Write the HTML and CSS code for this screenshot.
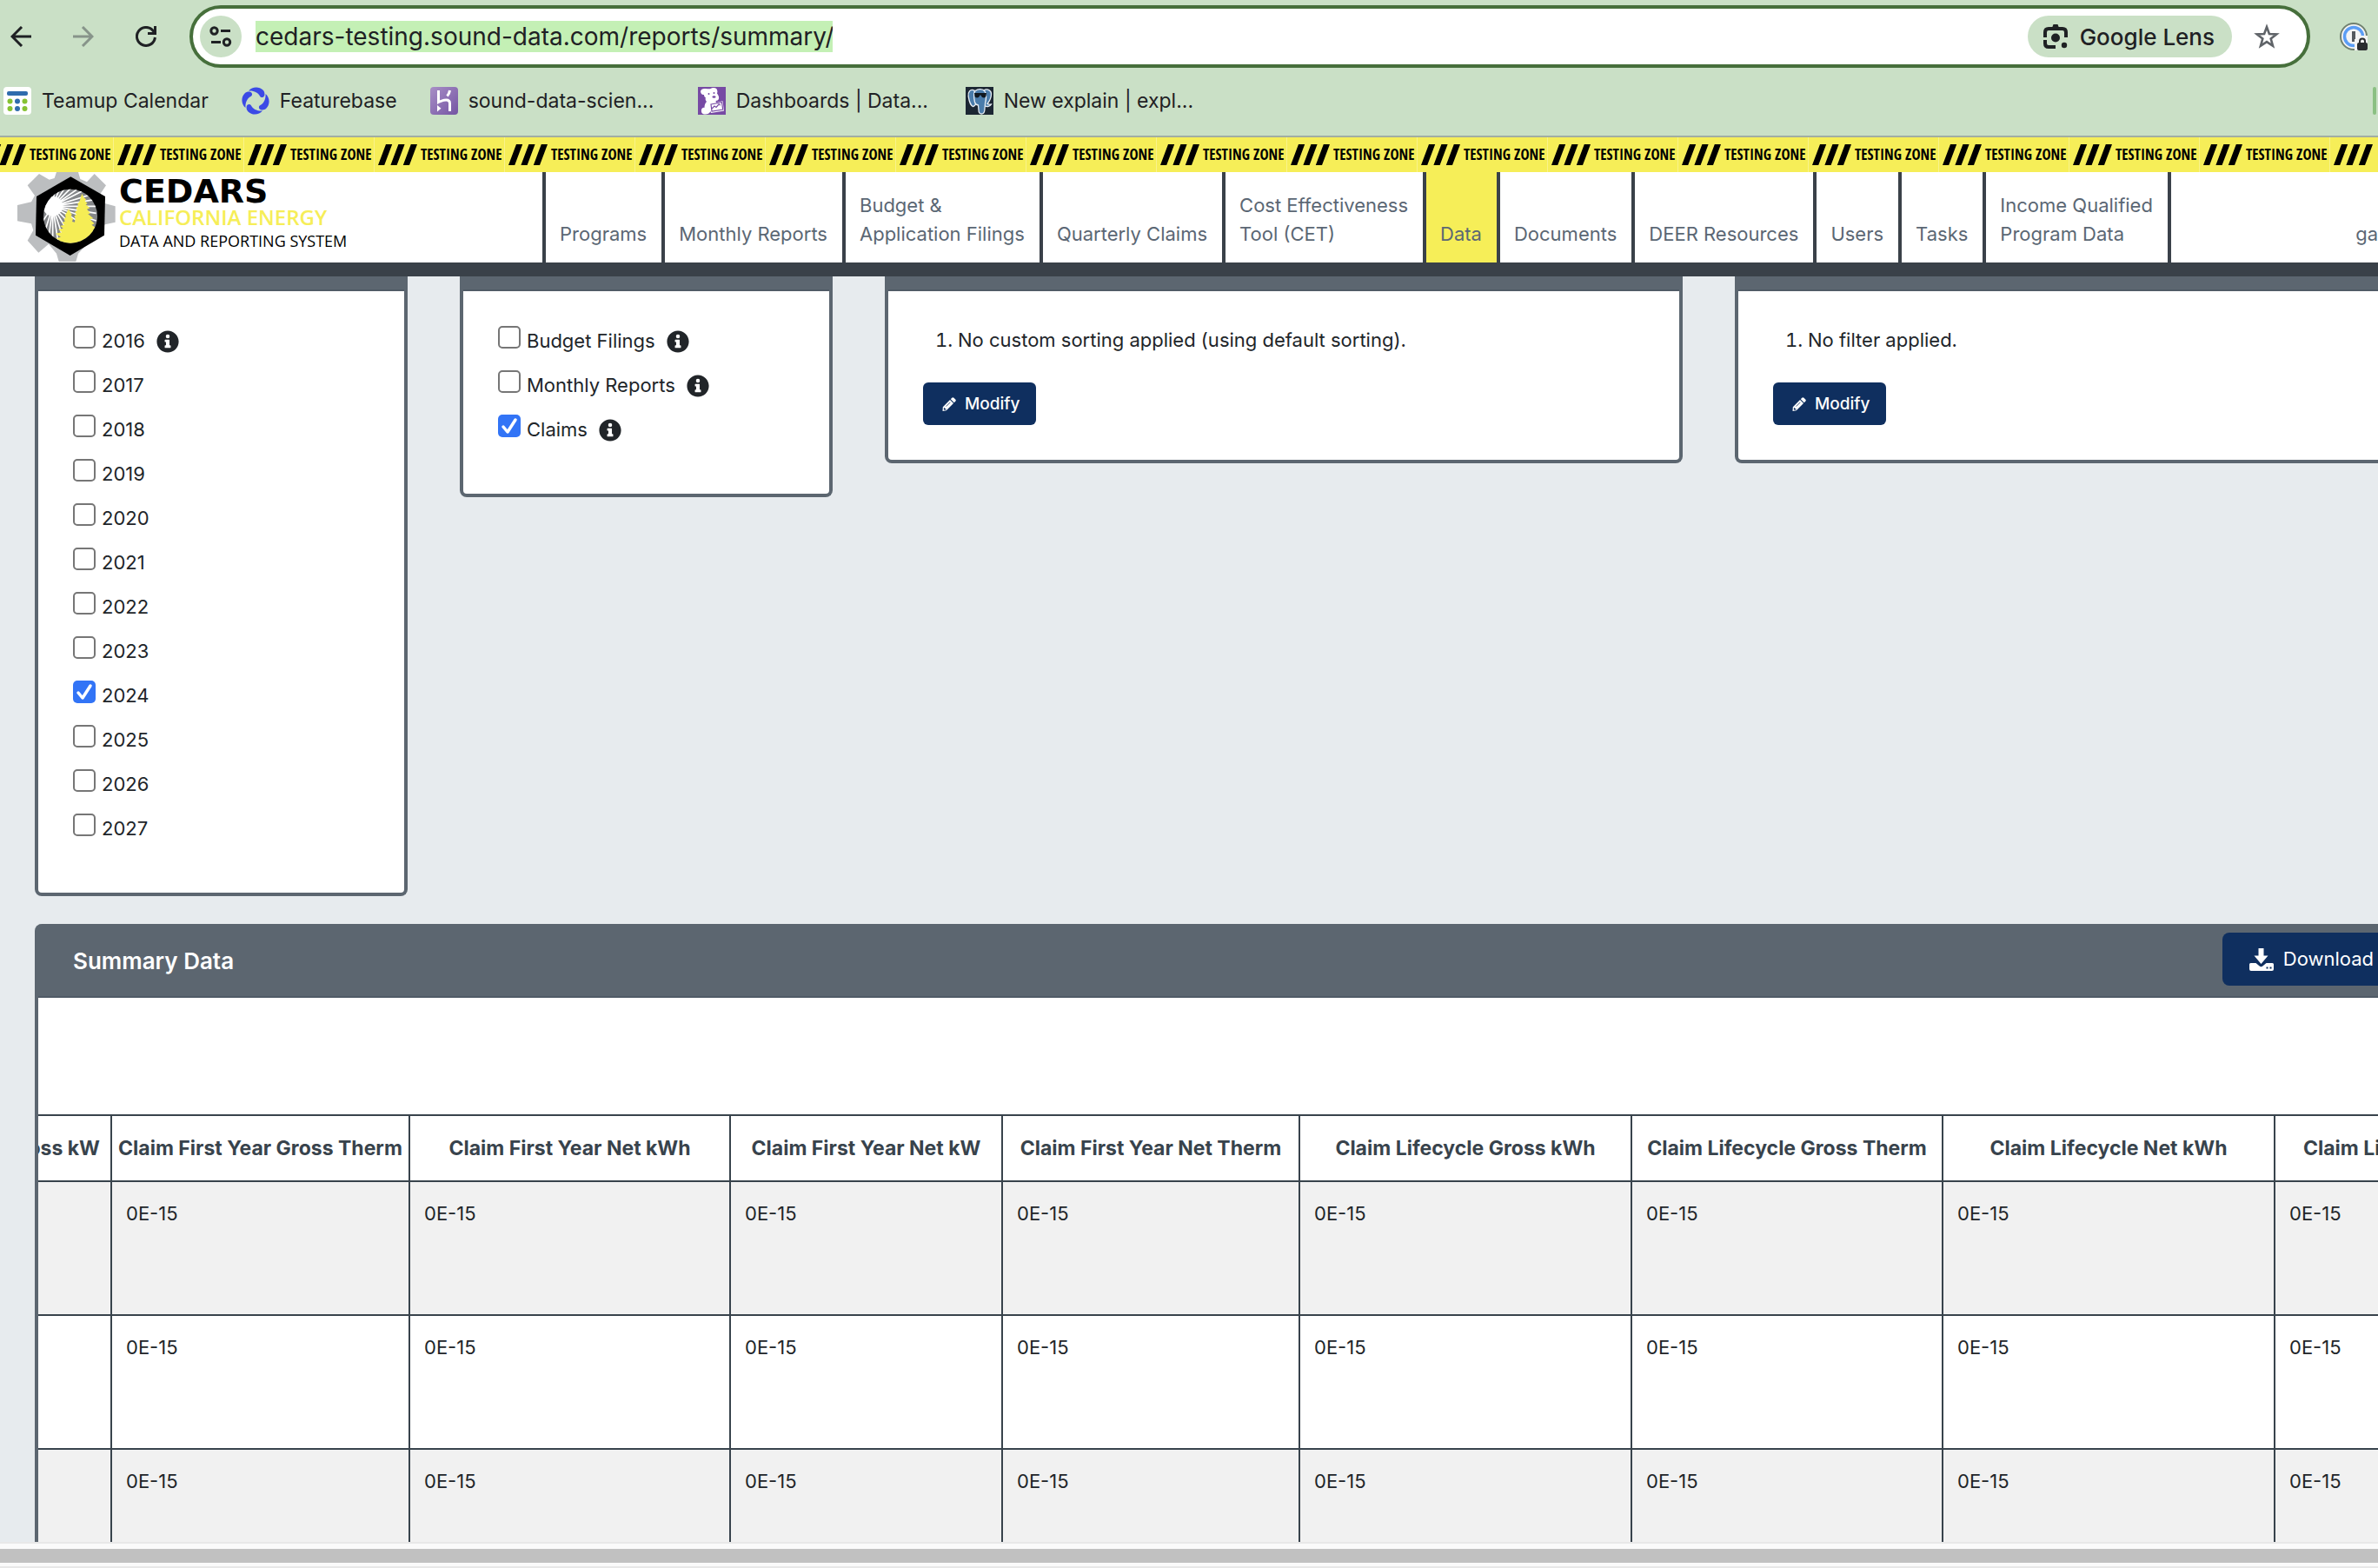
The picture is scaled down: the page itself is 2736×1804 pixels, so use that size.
FILE: index.html
```html
<!DOCTYPE html>
<html lang="en">
<head>
<meta charset="utf-8">
<meta name="viewport" content="width=device-width, initial-scale=1">
<title>CEDARS - Summary Reports</title>
<link rel="stylesheet" href="styles.css">
</head>
<body>
<svg class="defs" aria-hidden="true">
  <symbol id="info" viewBox="0 0 512 512"><path fill="currentColor" d="M256 8C119 8 8 119 8 256s111 248 248 248 248-111 248-248S393 8 256 8zm0 85a45 45 0 1 1 0 90 45 45 0 0 1 0-90zm68 295c0 7-5 12-12 12H200c-7 0-12-5-12-12v-34c0-7 5-12 12-12h16v-74h-16c-7 0-12-5-12-12v-34c0-7 5-12 12-12h84c7 0 12 5 12 12v120h16c7 0 12 5 12 12z"/></symbol>
  <symbol id="pencil" viewBox="0 0 16 16"><path fill="currentColor" d="M11.2.8a1.6 1.6 0 0 1 2.3 0l1.7 1.7a1.6 1.6 0 0 1 0 2.3l-1.4 1.4-4-4zM9 3l4 4-8.2 8.200L.5 16 .8 11.200zM2 12.200l-.2 1.900.7.700 1.900-.3v-1.200H3.200v-1.100z"/><path d="M4.600 10.600 9.400 5.800" stroke="#0f2f5f" stroke-width=".8"/></symbol>
</svg>

<header class="browser">
  <div class="toolbar">
    <button class="tool" aria-label="Back"><svg width="24" height="24" viewBox="0 0 24 24" fill="none" stroke="#1f2124" stroke-width="3"><path d="M24 12H2M13 1 2 12l11 11"/></svg></button>
    <button class="tool" aria-label="Forward"><svg width="24" height="24" viewBox="0 0 24 24" fill="none" stroke="#87948a" stroke-width="3"><path d="M0 12h22M11 1l11 11-11 11"/></svg></button>
    <button class="tool" aria-label="Reload"><svg width="24" height="24" viewBox="0 0 24 24" fill="none" stroke="#1f2124" stroke-width="3"><path d="M22.400 13A10.500 10.500 0 1 1 20 5.200l2 3"/><path d="M22.500 0v8.500H14"/></svg></button>
    <div class="omnibox">
      <button class="site-info" aria-label="View site information"><svg width="26" height="24" viewBox="0 0 26 24" fill="none" stroke="#1f2124" stroke-width="3"><circle cx="5.500" cy="5.500" r="3.700"/><path d="M13 5.500h11M2 18.500h11"/><circle cx="20" cy="18.500" r="3.700"/></svg></button>
      <input class="url" type="text" aria-label="Address" value="cedars-testing.sound-data.com/reports/summary/" size="46">
      <button class="lens"><svg width="28" height="28" viewBox="0 0 28 28"><path fill="none" stroke="#1f2124" stroke-width="4" d="M2 15V9q0-4 4-4h16q4 0 4 4v6M2 18v4q0 4 4 4h8"/><path fill="#1f2124" d="M10 4 11.500 0h5L18 4z"/><circle cx="14" cy="15.500" r="5" fill="#1f2124"/><circle cx="24" cy="24" r="3.200" fill="#1f2124"/></svg>Google Lens</button>
      <button class="tool star" aria-label="Bookmark this tab"><svg width="30" height="30" viewBox="0 0 30 30"><path fill="none" stroke="#5f6368" stroke-width="2.600" d="m15 4 2.900 8 8.400.400-6.600 5.200 2.300 8.200-7-4.700-7 4.700 2.300-8.200L3.700 12.400l8.400-.400z"/></svg></button>
    </div>
    <button class="tool" aria-label="1Password"><svg width="32" height="32" viewBox="0 0 32 32"><circle cx="16" cy="16" r="15" fill="#f4f4f4" stroke="#70806f" stroke-width="2"/><circle cx="16" cy="16" r="10.500" fill="none" stroke="#5b9df5" stroke-width="3.500"/><rect x="14" y="10" width="4" height="12" fill="#55595e"/><path fill="#f4f4f4" d="M17 19h3v-4h12v17H17z"/><rect x="20" y="23" width="12" height="9" rx="2" fill="#2b2d30"/><path fill="none" stroke="#2b2d30" stroke-width="2" d="M23 24v-2.500a3 3 0 0 1 6 0V24"/></svg></button>
  </div>
  <nav class="bookmarks" aria-label="Bookmarks">
    <a href="#"><svg width="32" height="32" viewBox="0 0 32 32"><rect width="32" height="32" rx="4" fill="#fff"/><rect x="4" y="5" width="24" height="5" rx="2" fill="#2f6cad"/><g fill="#86c232"><circle cx="7.500" cy="16.500" r="3"/><circle cx="24.500" cy="16.500" r="3"/><circle cx="7.500" cy="25" r="3"/><circle cx="24.500" cy="25" r="3"/></g><g fill="#2f6cad"><circle cx="16" cy="16.500" r="3"/><circle cx="16" cy="25" r="3"/></g></svg><span>Teamup Calendar</span></a>
    <a href="#"><svg width="32" height="32" viewBox="0 0 32 32" fill="#3b4ae6"><g id="fb"><path d="M8 4.500C12-.500 20-1 24.500 3.500c2 2 2.200 4.500 1.700 6.500-.600 2.300-4 3-5.200.500C19 6.500 14 4 8 4.500z"/></g><use href="#fb" transform="rotate(90 16 16)"/><use href="#fb" transform="rotate(180 16 16)"/><use href="#fb" transform="rotate(270 16 16)"/></svg><span>Featurebase</span></a>
    <a href="#"><svg width="32" height="32" viewBox="0 0 32 32"><defs><linearGradient id="hk" x1="0" y1="0" x2="1" y2="1"><stop offset="0" stop-color="#a88fc6"/><stop offset="1" stop-color="#7454a3"/></linearGradient></defs><rect width="32" height="32" rx="4" fill="url(#hk)"/><path fill="none" stroke="#fff" stroke-width="3" d="M9.500 4v13.500c3-1.500 6-2.500 9-2.500q4 0 4 4v9M22.500 4c-.300 2.500-1.300 4.500-3 6.500"/><path fill="#fff" d="m8 21 4.500 3.800L8 28.500z"/></svg><span class="clip">sound-data-scien...</span></a>
    <a href="#"><svg width="32" height="32" viewBox="0 0 32 32"><rect width="32" height="32" fill="#774aa4"/><path fill="#fff" d="M3 5c.500-2.500 3-3.500 6-3 2 0 3.500.500 5 .200C16 1 19 .500 20.500 1.500c1.800 1 2.500 4 1.500 6 1.500 2 2.500 4 2 6-.500 1.800-2 2.500-3.500 2.500l.500 2 7.500-1.700 1.500 11.200-15 2.500-.500-2c-1 2.500-3.500 3.500-6 3.500-3.500 0-5-2-4.500-5 .300-2 2-3 3.500-2.500 0-3 .500-5 2.500-7-1.500-1.500-1.500-3-1.200-5C7.500 12 7 10.500 7 9 5 9.500 3 7.500 3 5z"/><path fill="none" stroke="#774aa4" stroke-width="1.200" d="m15 20 12.500-2.300 1.200 8.300L16 28zM16 25l3-3 2 1.500 3-3.500 2 1"/><circle cx="12.500" cy="8" r="1" fill="#774aa4"/><circle cx="18.500" cy="7" r="1" fill="#774aa4"/><ellipse cx="18.500" cy="11.500" rx="2" ry="1.200" fill="#774aa4"/></svg><span class="clip">Dashboards | Data...</span></a>
    <a href="#"><svg width="32" height="32" viewBox="0 0 32 32"><rect width="32" height="32" fill="#1c2733"/><g stroke="#e8eef4" stroke-width="1.300" fill="#4a7cab"><path d="M10 4C5 2 2.500 6 3.200 11c.800 5.500 3 11 5.300 11.500 1.500.200 2.300-1.500 3.500-3z"/><path d="M21 4c4-2.500 8.500 0 8.500 4 0 5-2.500 9-4.500 11.500 1.500 1 3 .500 4.500.500-1.500 2.500-5 3-7 2z"/><path d="M11 4.500c3.500-2.500 8.500-2.500 11 .500 2.500 4 1.500 10 .500 14l-.700 8c-.300 3-1.600 4-3.600 4s-3.200-1.500-3.200-4.500l-.500-5.500c-2-.500-3.500-1.500-4-3.500C9.500 13 8.500 8 11 4.500z"/></g><path fill="#101820" d="M10 7h14l-.500 3.500c-.500 2.500-4.500 2.500-5.500 0L17 9l-1 1.500c-1 2.500-5 2.500-5.500 0z"/></svg><span class="clip">New explain | expl...</span></a>
    <i class="divider"></i>
  </nav>
</header>

<div class="tape">
  <span>TESTING ZONE</span><span>TESTING ZONE</span><span>TESTING ZONE</span><span>TESTING ZONE</span><span>TESTING ZONE</span><span>TESTING ZONE</span><span>TESTING ZONE</span><span>TESTING ZONE</span><span>TESTING ZONE</span><span>TESTING ZONE</span><span>TESTING ZONE</span><span>TESTING ZONE</span><span>TESTING ZONE</span><span>TESTING ZONE</span><span>TESTING ZONE</span><span>TESTING ZONE</span><span>TESTING ZONE</span><span>TESTING ZONE</span><span></span>
</div>

<header class="site">
  <a class="brand" href="#">
    <svg width="113" height="104" viewBox="60 144 339 312">
      <path fill="#bcbec0" d="M195 144h75l7 24 23 10 26-28 40 40-20 30 16 14v18l36 10v55l-36 8-92 100-8 28h-59l-8-28-27-33-35 30-38-42 20-35-7-23-48-9v-55l48-11 12-22-25-35 40-40 35 20 18-5z"/>
      <path d="m244 160 119 68-3 134-118 70-119-70 3-134z"/>
      <clipPath id="disc"><circle cx="243" cy="296" r="93"/></clipPath>
      <g clip-path="url(#disc)">
        <path fill="#85878a" d="M145 200h196v190H145z"/>
        <circle cx="182" cy="262" r="34" fill="#fff"/>
        <path stroke="#fff" stroke-width="5" d="M182 262 190 190M182 262l28-72M182 262l48-72M182 262l70-70M182 262l92-64M182 262l120-62M182 262l150-46M182 262l150-24M182 262l150 0M182 262l150 24M182 262l150 50M182 262l120 70M182 262l90 90M182 262l60 100M182 262l36 110M182 262l18 120M182 262v120M182 262l-14 110M182 262l-28 90M182 262l-40 60"/>
        <path fill="#f5ed55" d="m283 218 6 14 8 6-4 6 9 8-6 4 14 12-10 4 12 14-8 3 18 15-12 3 16 15-10 4 18 12-14 6 14 12-20 8 2 20-30 20-40 12-44-6-10-24 14-6-12-8 16-4-18-12 22-4-12-10 16-4-10-8 14-4-7-8 9-4-3-8 6-6-2-8 5-8 7-13 6 12 5 8-3 8 7 6-3 10 9 2 2-14-4-6 8-8-6-6 9-8-5-6 8-8-2-8 6-6z"/>
      </g>
    </svg>
    <span class="brand-text"><b class="brand-name">CEDARS</b><span class="brand-energy">CALIFORNIA ENERGY</span><span class="brand-system">DATA AND REPORTING SYSTEM</span></span>
  </a>
  <nav class="menu" aria-label="Main">
    <a href="#">Programs</a>
    <a href="#">Monthly Reports</a>
    <a href="#">Budget &amp;<br>Application Filings</a>
    <a href="#">Quarterly Claims</a>
    <a href="#">Cost Effectiveness<br>Tool (CET)</a>
    <a href="#" class="active">Data</a>
    <a href="#">Documents</a>
    <a href="#">DEER Resources</a>
    <a href="#">Users</a>
    <a href="#">Tasks</a>
    <a href="#">Income Qualified<br>Program Data</a>
  </nav>
  <a class="account" href="#">ga</a>
</header>

<main>
  <div class="filters">
    <section class="card">
      <div class="card-body checks">
        <label><input type="checkbox"><span>2016</span><svg class="info"><use href="#info"/></svg></label>
        <label><input type="checkbox"><span>2017</span></label>
        <label><input type="checkbox"><span>2018</span></label>
        <label><input type="checkbox"><span>2019</span></label>
        <label><input type="checkbox"><span>2020</span></label>
        <label><input type="checkbox"><span>2021</span></label>
        <label><input type="checkbox"><span>2022</span></label>
        <label><input type="checkbox"><span>2023</span></label>
        <label><input type="checkbox" checked><span>2024</span></label>
        <label><input type="checkbox"><span>2025</span></label>
        <label><input type="checkbox"><span>2026</span></label>
        <label><input type="checkbox"><span>2027</span></label>
      </div>
    </section>
    <section class="card">
      <div class="card-body checks">
        <label><input type="checkbox"><span>Budget Filings</span><svg class="info"><use href="#info"/></svg></label>
        <label><input type="checkbox"><span>Monthly Reports</span><svg class="info"><use href="#info"/></svg></label>
        <label><input type="checkbox" checked><span>Claims</span><svg class="info"><use href="#info"/></svg></label>
      </div>
    </section>
    <section class="card">
      <div class="card-body rules">
        <ol><li>No custom sorting applied (using default sorting).</li></ol>
        <button class="modify"><svg width="16" height="16"><use href="#pencil"/></svg>Modify</button>
      </div>
    </section>
    <section class="card open">
      <div class="card-body rules">
        <ol><li>No filter applied.</li></ol>
        <button class="modify"><svg width="16" height="16"><use href="#pencil"/></svg>Modify</button>
      </div>
    </section>
  </div>

  <section class="summary">
    <div class="summary-head">
      <h2>Summary Data</h2>
      <button class="download"><svg width="28" height="26" viewBox="0 0 28 26" fill="#fff"><path d="M10.500 0h6v8.500h5L13.500 18 5.500 8.500h5z"/><path d="M1.500 17h6l4.200 3.600q1.800 1.300 3.600 0L19.500 17h7q1.500 0 1.500 1.500V24q0 2-2 2H2q-2 0-2-2v-5.500Q0 17 1.500 17z"/><path fill="#0f2f5f" d="M19.500 21.500h2v2h-2zM23.500 21.500h2v2h-2z"/></svg>Download</button>
    </div>
    <div class="table-wrap">
      <table>
        <colgroup><col class="c84"><col class="c343"><col class="c369"><col class="c313"><col class="c342"><col class="c382"><col class="c358"><col class="c382"><col></colgroup>
        <thead>
          <tr><th class="scrolled"><span>Claim First Year Gross kW</span></th><th>Claim First Year Gross Therm</th><th>Claim First Year Net kWh</th><th>Claim First Year Net kW</th><th>Claim First Year Net Therm</th><th>Claim Lifecycle Gross kWh</th><th>Claim Lifecycle Gross Therm</th><th>Claim Lifecycle Net kWh</th><th class="edge">Claim Lifecycle Net Therm</th></tr>
        </thead>
        <tbody>
          <tr><td></td><td>0E-15</td><td>0E-15</td><td>0E-15</td><td>0E-15</td><td>0E-15</td><td>0E-15</td><td>0E-15</td><td>0E-15</td></tr>
          <tr><td></td><td>0E-15</td><td>0E-15</td><td>0E-15</td><td>0E-15</td><td>0E-15</td><td>0E-15</td><td>0E-15</td><td>0E-15</td></tr>
          <tr><td></td><td>0E-15</td><td>0E-15</td><td>0E-15</td><td>0E-15</td><td>0E-15</td><td>0E-15</td><td>0E-15</td><td>0E-15</td></tr>
        </tbody>
      </table>
    </div>
  </section>
</main>
<div class="scrollbar"><i></i></div>
</body>
</html>
```
FILE: styles.css
```css
:root {
  --ink: #212529;
  --dark: #3a4149;
  --slate: #5c6670;
  --navy: #0f2f5f;
  --chrome: #cae0c6;
  --yellow: #f6ee58;
}
*, *::before { box-sizing: border-box; }
body {
  margin: 0;
  height: 100vh;
  display: flex;
  flex-direction: column;
  overflow: hidden;
  background: #e7ebee;
  color: var(--ink);
  font: 22px/33px Inter, "Liberation Sans", sans-serif;
}
a { color: inherit; text-decoration: none; }
button, input { font: inherit; color: inherit; }
button { border: 0; padding: 0; background: none; cursor: pointer; }
svg { flex: none; display: block; }
.defs { position: absolute; width: 0; height: 0; }

/* Browser frame */
.browser { flex: none; background: var(--chrome); border-bottom: 2px solid #a2aea2; color: #1f2124; }
.toolbar { display: flex; align-items: center; padding: 6px 12px; height: 84px; gap: 48px; }
.tool { flex: none; }
.omnibox {
  flex: 1;
  display: flex;
  align-items: center;
  height: 72px;
  margin: 0 -14px 0 -10px;
  padding: 0 31px 0 8px;
  border: 4px solid #466f3b;
  border-radius: 36px;
  background: #fff;
}
.site-info {
  display: grid;
  place-items: center;
  width: 48px;
  height: 48px;
  margin-right: 16px;
  border-radius: 50%;
  background: var(--chrome);
}
.url {
  width: 664px;
  height: 36px;
  padding: 0;
  border: 0;
  background: #c4f0b5;
  font-size: 28px;
  line-height: 36px;
}
.lens {
  display: flex;
  align-items: center;
  gap: 14px;
  height: 48px;
  margin: 0 25px 0 auto;
  padding: 0 20px 0 18px;
  border-radius: 24px;
  background: var(--chrome);
  font-size: 26px;
  font-weight: 500;
}
.bookmarks {
  display: flex;
  align-items: center;
  gap: 38px;
  height: 72px;
  padding: 0 2px 8px 4px;
  font-size: 23px;
}
.bookmarks a { display: flex; align-items: center; gap: 12px; }
.bookmarks span { white-space: nowrap; }
.bookmarks .clip { width: 226px; }
.divider { width: 4px; height: 32px; margin-left: auto; border-radius: 2px; background: #8bc083; }

/* Testing tape */
.tape {
  flex: none;
  display: flex;
  height: 40px;
  margin-left: -20px;
  overflow: hidden;
  background: var(--yellow);
  color: #000;
  font: 700 17px/40px "Open Sans Condensed", "Roboto Condensed", "Open Sans", sans-serif;
}
.tape span {
  flex: none;
  display: flex;
  align-items: center;
  gap: 4px;
  width: 150px;
  padding-left: 4px;
  border-left: 1px solid #f9f38c;
  white-space: nowrap;
}
.tape span::before {
  content: "";
  width: 45px;
  height: 24px;
  background: #000;
  clip-path: polygon(20% 0, 36% 0, 16% 100%, 0 100%, 20% 0, 52% 0, 68% 0, 48% 100%, 32% 100%, 52% 0, 84% 0, 100% 0, 80% 100%, 64% 100%, 84% 0);
}

/* Site header */
.site {
  flex: none;
  display: flex;
  height: 120px;
  background: #fff;
  border-bottom: 16px solid var(--dark);
  color: #5b6774;
}
.brand { flex: 0 0 624px; display: flex; gap: 4px; padding-left: 20px; }
.brand-text { display: flex; flex-direction: column; padding-top: 4px; color: #000; }
.brand-name { font: 700 38px/36px "DejaVu Sans", sans-serif; }
.brand-energy { font: 600 24px/24px "Open Sans", sans-serif; color: var(--yellow); }
.brand-system { font: 400 18px/30px "Open Sans", sans-serif; }
.menu { display: flex; border-right: 4px solid var(--dark); }
.menu a {
  display: flex;
  align-items: flex-end;
  padding: 0 17px 16px 16px;
  border-left: 4px solid var(--dark);
  white-space: nowrap;
}
.menu .active { background: var(--yellow); }
.account { align-self: flex-end; margin-left: auto; padding-bottom: 16px; }

/* Filter cards */
main { flex: 1; min-height: 0; overflow: hidden; padding-left: 40px; }
.filters {
  display: grid;
  grid-template-columns: 429fr 429fr 918fr 740fr;
  gap: 60px;
  align-items: start;
  margin-bottom: 32px;
}
.card {
  border: 4px solid var(--slate);
  border-top: 0;
  border-radius: 0 0 8px 8px;
  background: #fff;
}
.card::before {
  content: "";
  display: block;
  height: 17px;
  background: var(--slate);
  border-bottom: 2px solid #505b66;
}
.card.open { border-right: 0; border-radius: 0 0 0 8px; }
.checks { padding: 32px 40px 48px; }
.checks label { display: flex; align-items: center; height: 51px; }
.checks input {
  appearance: none;
  flex: none;
  width: 26px;
  height: 26px;
  margin: 0 7px 10px 0;
  border: 2px solid #767676;
  border-radius: 5px;
  background: #fff;
}
.checks input:checked {
  border: 0;
  background: #3274f6 url("data:image/svg+xml,%3Csvg xmlns='http://www.w3.org/2000/svg' viewBox='0 0 26 26'%3E%3Cpath d='m6 14 5 6 9-14' fill='none' stroke='white' stroke-width='3.500' stroke-linecap='round' stroke-linejoin='round'/%3E%3C/svg%3E");
}
.info { width: 26px; height: 26px; margin-left: 13px; }
.rules { padding: 40px; }
.rules ol { margin: 0 0 32px; padding-left: 40px; }
.modify {
  display: flex;
  align-items: center;
  gap: 10px;
  height: 49px;
  padding: 0 18px 0 22px;
  border-radius: 6px;
  background: var(--navy);
  color: #fff;
  font-size: 19px;
  font-weight: 500;
}

/* Summary table */
.summary { border-left: 4px solid var(--slate); border-radius: 8px 0 0 0; background: #fff; }
.summary-head {
  display: flex;
  align-items: center;
  justify-content: space-between;
  height: 85px;
  padding-left: 40px;
  border-bottom: 2px solid #505b66;
  border-radius: 4px 0 0 0;
  background: var(--slate);
  color: #fff;
}
.summary-head h2 { margin: 0; padding-top: 2px; font-size: 26px; font-weight: 600; }
.download {
  display: flex;
  align-items: center;
  gap: 11px;
  height: 61px;
  padding: 0 5px 0 31px;
  margin-bottom: 2px;
  border-radius: 8px 0 0 8px;
  background: var(--navy);
}
.table-wrap { padding-top: 134px; overflow: hidden; }
table { width: 100%; table-layout: fixed; border-collapse: collapse; }
.c84 { width: 84px; }
.c313 { width: 313px; }
.c342 { width: 342px; }
.c343 { width: 343px; }
.c358 { width: 358px; }
.c369 { width: 369px; }
.c382 { width: 382px; }
th, td { border: 2px solid #38434c; }
th:first-child, td:first-child { border-left: 0; }
th:last-child, td:last-child { border-right: 0; }
th {
  height: 76px;
  padding: 0;
  overflow: hidden;
  color: #38434c;
  font-size: 23px;
  font-weight: 700;
  white-space: nowrap;
}
.scrolled span { display: flex; justify-content: flex-end; padding-right: 12px; }
.edge { padding-left: 32px; text-align: left; }
td { height: 154px; padding: 20px 16px; vertical-align: top; }
tbody tr:nth-child(odd) { background: #f1f1f1; }

/* Horizontal scrollbar */
.scrollbar {
  flex: none;
  height: 30px;
  padding: 6px 0;
  border: solid #e8e8e8;
  border-width: 2px 0;
  background: #fafafa;
}
.scrollbar i { display: block; height: 16px; background: #c1c1c1; }
```
